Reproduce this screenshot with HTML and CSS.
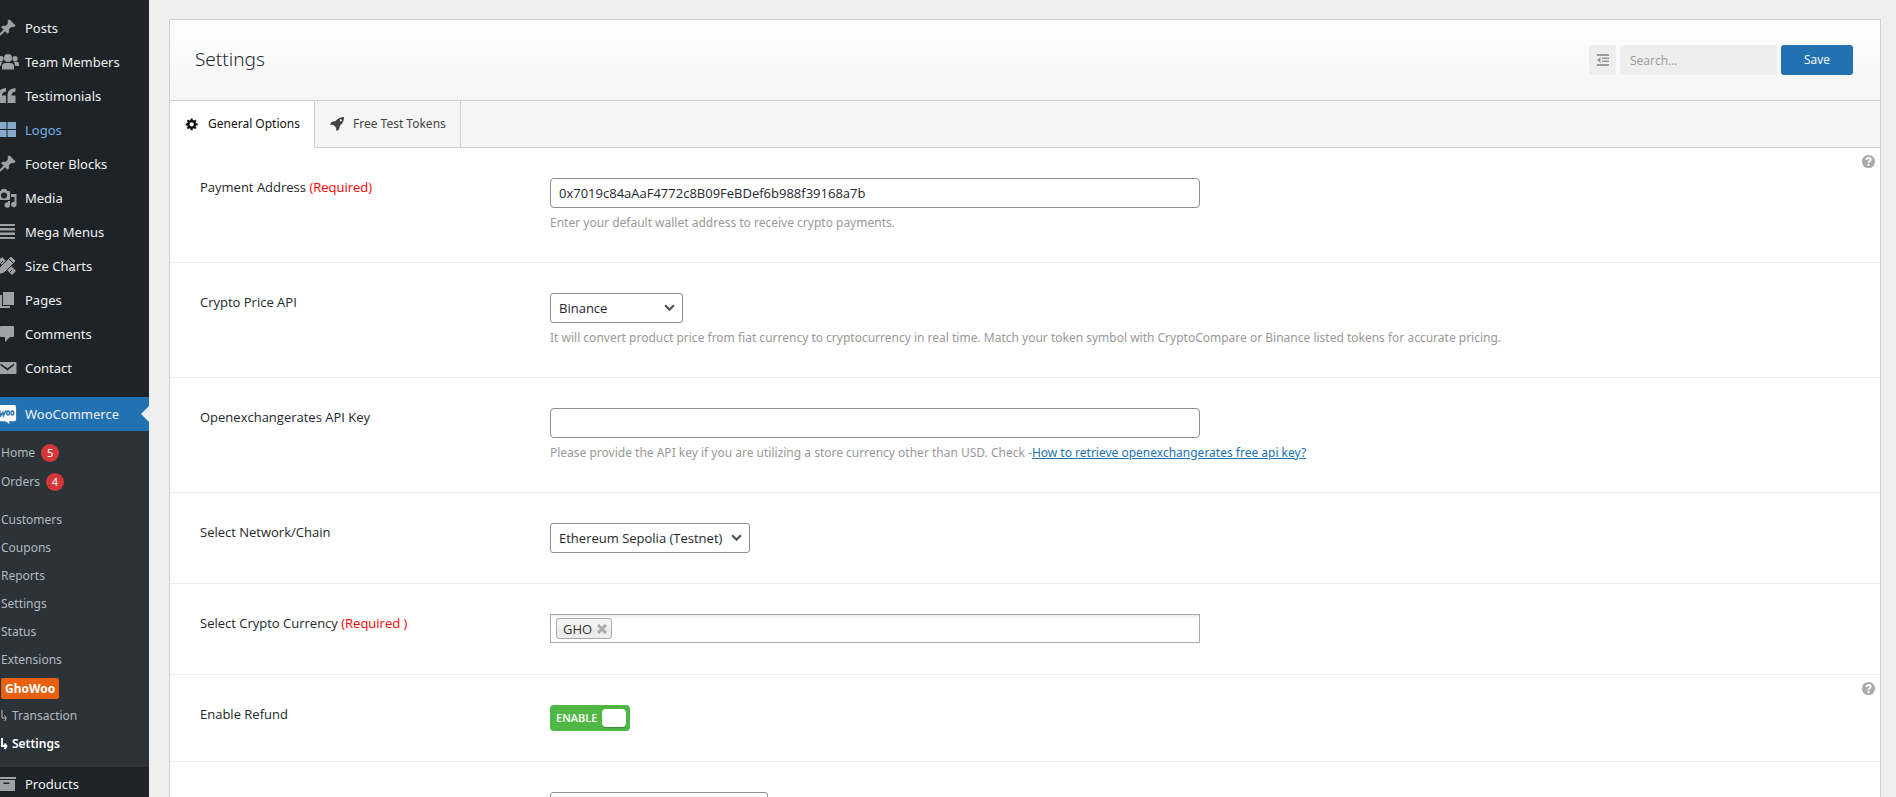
FILE: index.html
```html
<!DOCTYPE html>
<html lang="en">
<head>
<meta charset="utf-8">
<title>Settings</title>
<link rel="stylesheet" href="styles.css">
</head>
<body>
<svg class="defs" aria-hidden="true">
  <symbol id="pin" viewBox="0 0 20 20"><path d="M10.44 3.02l1.82-1.82 6.36 6.35-1.83 1.82c-1.05-.68-2.48-.57-3.41.36l-.75.75c-.92.93-1.04 2.35-.35 3.41l-1.83 1.82-2.41-2.41-2.8 2.79c-.42.42-3.38 2.71-3.8 2.29s1.86-3.39 2.28-3.81l2.79-2.79L4.1 9.36l1.83-1.82c1.05.69 2.48.57 3.4-.36l.75-.75c.93-.92 1.05-2.35.36-3.41z"/></symbol>
  <symbol id="help" viewBox="0 0 16 16"><circle cx="8" cy="8" r="7"/><path d="M5.700 6.300Q5.900 4.200 8 4.200Q10.300 4.200 10.300 6.200Q10.300 7.400 8.900 8Q8 8.400 8 9.400" fill="none" stroke="#fff" stroke-width="2"/><circle cx="8" cy="11.600" r="1.200" fill="#fff"/></symbol>
</svg>
<div class="layout">
  <nav class="side" aria-label="Admin menu">
    <ul class="menu">
      <li><a href="#"><svg class="ico" viewBox="0 0 20 20"><use href="#pin"/></svg>Posts</a></li>
      <li><a href="#"><svg class="ico wide-ico" viewBox="0 0 22 20"><circle cx="11" cy="6" r="4"/><path d="M5 17.500v-3q0-3.500 4-3.500h4q4 0 4 3.500v3z"/><circle cx="4" cy="6.500" r="2.600"/><circle cx="18" cy="6.500" r="2.600"/><path d="M0 14v-2q0-2.500 3-2.500h2.500Q4 11 4 14zM22 14v-2q0-2.500-3-2.500h-2.500Q18 11 18 14z"/></svg>Team Members</a></li>
      <li><a href="#"><svg class="ico" viewBox="0 0 20 20"><path d="M9 2v3.500Q5 6 5 9.500h4V17H1V9Q1 2.500 9 2zM18.500 2v3.500Q14.500 6 14.500 9.500h4V17h-8V9q0-6.500 8-7z"/></svg>Testimonials</a></li>
      <li><a href="#" class="hover"><svg class="ico" viewBox="0 0 20 20"><path d="M1 2h8.500v7H1zM10.500 2H19v7h-8.500zM1 10h8.500v7H1zM10.500 10H19v7h-8.500z"/></svg>Logos</a></li>
      <li><a href="#"><svg class="ico" viewBox="0 0 20 20"><use href="#pin"/></svg>Footer Blocks</a></li>
      <li><a href="#"><svg class="ico" viewBox="0 0 20 20"><path fill-rule="evenodd" d="M13 11V4c0-.550-.450-1-1-1h-1.670L9 1H5L3.670 3H2c-.550 0-1 .450-1 1v7c0 .550.450 1 1 1h10c.550 0 1-.450 1-1zM7 4.500a3 3 0 110 6 3 3 0 010-6z"/><path d="M14 6h5.500v10.500a2.700 2.700 0 11-2-2.600V9H14zM11 13h2v4a2.700 2.700 0 11-2-2.600z"/></svg>Media</a></li>
      <li><a href="#"><svg class="ico" viewBox="0 0 20 20"><path d="M1 2h17v2H1zM1 6h17v2.500H1zM1 10.500h17V13H1zM1 15h17v2H1z"/></svg>Mega Menus</a></li>
      <li><a href="#"><svg class="ico" viewBox="0 0 20 20"><path d="M1 5l4-4 14 14-4 4z"/><path d="M14 0l5 5L7 17l-6 2 1-7z" stroke="#1d2327"/><path d="M4 7l2-2M13 16l2-2M12 3l4 4" stroke="#1d2327" fill="none"/></svg>Size Charts</a></li>
      <li><a href="#"><svg class="ico" viewBox="0 0 20 20"><path d="M6 15V2h11v13H6zM5 16h8v2H3V5h2v11z"/></svg>Pages</a></li>
      <li><a href="#"><svg class="ico" viewBox="0 0 20 20"><path d="M4 2h12q1 0 1 1v9q0 1-1 1h-3l-5 5v-5H4q-1 0-1-1V3q0-1 1-1z"/></svg>Comments</a></li>
      <li><a href="#"><svg class="ico" viewBox="0 0 20 20"><path fill-rule="evenodd" d="M3 4h15.500q1 0 1 1v10q0 1-1 1H2.500q-1 0-1-1V5q0-1 1-1zM3.500 5.500v1.800L10.500 12.500l6.500-5.200V5.500L10.500 10.200z"/></svg>Contact</a></li>
      <li class="current"><a href="#"><svg class="ico woo" viewBox="0 0 20 22"><path d="M0 1h18q2 0 2 2v14q0 2-2 2h-6l1 3-5-3H0z"/><path d="M2 7l1 6 2.500-4 .5 4L9 7" class="woo-line"/><ellipse cx="11.200" cy="10" rx="1.500" ry="2.300" class="woo-line"/><ellipse cx="15.800" cy="10" rx="1.500" ry="2.300" class="woo-line"/></svg>WooCommerce</a>
        <ul class="sub">
          <li class="counted"><a href="#">Home <span class="count">5</span></a></li>
          <li class="counted last-counted"><a href="#">Orders <span class="count">4</span></a></li>
          <li><a href="#">Customers</a></li>
          <li><a href="#">Coupons</a></li>
          <li><a href="#">Reports</a></li>
          <li><a href="#">Settings</a></li>
          <li><a href="#">Status</a></li>
          <li><a href="#">Extensions</a></li>
          <li><a href="#"><b class="brand">GhoWoo</b></a></li>
          <li><a href="#"><svg class="hook" viewBox="0 0 7 12"><path d="M1 0v8h4M3.500 5.500l2 2.500-2 3"/></svg>Transaction</a></li>
          <li><a href="#" class="active"><svg class="hook bold" viewBox="0 0 7 12"><path d="M1 0v8h4M3.500 5.500l2 2.500-2 3"/></svg>Settings</a></li>
        </ul>
      </li>
      <li><a href="#"><svg class="ico" viewBox="0 0 20 20"><path fill-rule="evenodd" d="M0 3h19v2H0zM1 6h17v11H1zM6.500 8.500v1.500h6V8.500z"/></svg>Products</a></li>
    </ul>
  </nav>
  <main class="main">
    <form class="panel">
      <header class="head">
        <h1>Settings</h1>
        <div class="tools">
          <button type="button" class="expand" aria-label="Show all options"><svg viewBox="0 0 12 12"><path d="M0 0h12v2H0zM5 3.500h7v1.500H5zM5 6.500h7v1.500H5zM0 10h12v2H0zM3.500 3v6L0 6z"/></svg></button>
          <input type="search" class="search" placeholder="Search..." aria-label="Search">
          <button type="button" class="save">Save</button>
        </div>
      </header>
      <div class="tabs">
        <a href="#" class="tab on"><svg viewBox="0 0 20 20"><path fill-rule="evenodd" d="M18 12h-2.180c-.170.700-.440 1.350-.810 1.930l1.540 1.540-2.100 2.100-1.540-1.540c-.580.360-1.230.630-1.910.790V19H8v-2.180c-.680-.160-1.330-.430-1.910-.790l-1.540 1.540-2.120-2.120 1.540-1.540c-.360-.580-.630-1.230-.790-1.910H1V9.030h2.170c.160-.700.440-1.350.800-1.940L2.430 5.550l2.100-2.100 1.540 1.540c.580-.370 1.240-.640 1.930-.810V2h3v2.180c.680.160 1.330.430 1.910.790l1.540-1.540 2.120 2.120-1.540 1.540c.360.590.640 1.240.800 1.940H18V12zm-8.500 1.500c1.660 0 3-1.340 3-3s-1.340-3-3-3-3 1.340-3 3 1.340 3 3 3z"/></svg>General Options</a>
        <a href="#" class="tab"><svg viewBox="0 0 14 14"><path fill-rule="evenodd" d="M14 0q.3 5-4 8.500l-1 4-2.500 1.500-.5-3.500L3.500 8 0 7.500 1.500 5l4-1Q9 0 14 0zM10.800 2.200a1.100 1.100 0 100 2.200 1.100 1.100 0 000-2.200z"/></svg>Free Test Tokens</a>
      </div>
      <div class="field">
        <label class="title" for="address">Payment Address <span class="req">(Required)</span></label>
        <div class="body"><input id="address" class="text" type="text" value="0x7019c84aAaF4772c8B09FeBDef6b988f39168a7b"><p>Enter your default wallet address to receive crypto payments.</p></div>
        <svg class="help" viewBox="0 0 16 16"><use href="#help"/></svg>
      </div>
      <div class="field">
        <label class="title" for="api">Crypto Price API</label>
        <div class="body"><span class="select"><select id="api" class="narrow"><option>Binance</option></select><svg viewBox="0 0 10 7"><path d="M1 1l4 4 4-4"/></svg></span><p>It will convert product price from fiat currency to cryptocurrency in real time. Match your token symbol with CryptoCompare or Binance listed tokens for accurate pricing.</p></div>
      </div>
      <div class="field">
        <label class="title" for="key">Openexchangerates API Key</label>
        <div class="body"><input id="key" class="text" type="text"><p>Please provide the API key if you are utilizing a store currency other than USD. Check -<a href="#">How to retrieve openexchangerates free api key?</a></p></div>
      </div>
      <div class="field">
        <label class="title" for="chain">Select Network/Chain</label>
        <div class="body"><span class="select"><select id="chain" class="medium"><option>Ethereum Sepolia (Testnet)</option></select><svg viewBox="0 0 10 7"><path d="M1 1l4 4 4-4"/></svg></span></div>
      </div>
      <div class="field">
        <label class="title" for="coins">Select Crypto Currency <span class="req">(Required )</span></label>
        <div class="body"><div class="chosen"><span class="chip">GHO<button type="button" aria-label="Remove GHO"><svg viewBox="0 0 10 10"><path d="M1 1l8 8M9 1l-8 8"/></svg></button></span><input id="coins" type="text"></div></div>
      </div>
      <div class="field">
        <label class="title" for="refund">Enable Refund</label>
        <div class="body"><label class="switch"><input id="refund" type="checkbox" checked><span>ENABLE</span><i></i></label></div>
        <svg class="help" viewBox="0 0 16 16"><use href="#help"/></svg>
      </div>
      <div class="field">
        <div></div>
        <div class="body"><span class="select"><select class="wide" aria-label="Order status"><option></option></select></span></div>
      </div>
    </form>
  </main>
</div>
</body>
</html>
```
FILE: styles.css
```css
* { box-sizing: border-box; }
html, body { height: 100%; }
body { margin: 0; overflow: hidden; background: #efefef; color: #23282d; font: 13px/20px "Open Sans", "Noto Sans", sans-serif; }
ul, p, h1 { margin: 0; padding: 0; }
ul { list-style: none; }
a { color: #2271b1; }
input, select, button { margin: 0; font: inherit; color: inherit; }
.defs { display: none; }
.layout { display: flex; height: 100%; }

.side { flex: none; width: 149px; height: 100%; overflow: hidden; background: #1d2327; font-family: "Noto Sans", sans-serif; }
.menu { padding-top: 11px; }
.menu a { display: flex; align-items: center; text-decoration: none; color: #f0f0f1; }
.menu > li > a { position: relative; gap: 8px; height: 34px; font-size: 13px; }
.ico { flex: none; width: 20px; height: 20px; margin-left: -3px; fill: #9ca2a7; }
.wide-ico { width: 22px; margin-right: -2px; }
.menu .hover { color: #72aee6; }
.hover .ico { fill: #85a9cb; }
.current { padding-top: 12px; }
.current > a { background: #2271b1; }
.current > a::after { content: ""; position: absolute; right: 0; border: 8px solid transparent; border-right-color: #efefef; border-left: 0; }
.woo { fill: #fff; }
.woo-line { fill: none; stroke: #2271b1; stroke-width: 1.500; }
.sub { padding: 7px 0 9px; background: #2c3338; font-size: 12px; }
.sub a { height: 28px; padding-left: 1px; gap: 6px; color: #b4b9be; }
.sub .counted a { height: 29px; }
.last-counted { margin-bottom: 10px; }
.count { width: 18px; height: 18px; border-radius: 9px; background: #d63638; color: #fff; font-size: 11px; line-height: 18px; text-align: center; }
.brand { padding: 0 4px; border-radius: 2px; background: #e9600f; color: #fff; line-height: 21px; font-weight: 700; }
.sub .active { color: #fff; font-weight: 600; }
.hook { width: 7px; height: 12px; margin-right: -2px; fill: none; stroke: currentColor; stroke-width: 1; }
.hook.bold { stroke-width: 2; }

.main { flex: 1; min-width: 0; padding: 19px 15px 0 20px; }
.panel { border: 1px solid #ccd0d4; background: #fff; }
.head { display: flex; align-items: center; justify-content: space-between; height: 81px; padding: 0 27px 0 25px; border-bottom: 1px solid #ccd0d4; background: linear-gradient(#fefefe, #f5f5f5); }
h1 { padding-bottom: 2px; font-family: "Noto Sans", sans-serif; font-size: 19px; line-height: 30px; font-weight: 300; }
.tools { display: flex; gap: 4px; }
.tools > * { height: 30px; border: 0; border-radius: 2px; background: #eee; }
.expand { display: grid; place-items: center; width: 27px; padding: 0; }
.expand svg { width: 12px; height: 12px; fill: #999; }
.search { width: 157px; padding: 0 10px; font-size: 12px; }
.search::placeholder { color: #999; }
.tools .save { width: 72px; border-radius: 3px; background: #2271b1; color: #fff; font-size: 12px; }

.tabs { display: flex; height: 47px; border-bottom: 1px solid #ccd0d4; background: #f5f5f5; font: 12px/20px "Noto Sans", sans-serif; }
.tab { display: flex; align-items: center; gap: 9px; height: 47px; padding: 0 14px 0 15px; border-right: 1px solid #ccd0d4; border-bottom: 1px solid #ccd0d4; color: #444; text-decoration: none; }
.tab.on { background: #fff; border-bottom-color: #fff; color: #111; }
.tab svg { width: 14px; height: 14px; fill: currentColor; }

.field { position: relative; display: grid; grid-template-columns: 350px 1fr; padding: 30px; border-top: 1px solid #eee; }
.tabs + .field { border-top: 0; }
.title { line-height: 18px; }
.req { color: red; }
.body p { margin-top: 5px; font: 12px/19px "Noto Sans", sans-serif; color: #999; }
.text { display: block; width: 650px; max-width: 100%; height: 30px; padding: 0 8px; border: 1px solid #8c8f94; border-radius: 4px; background: #fff; }
.select { position: relative; display: flex; width: max-content; align-items: center; }
.select select { height: 30px; padding: 0 24px 0 8px; border: 1px solid #8c8f94; border-radius: 3px; background: #fff; appearance: none; }
.select svg { position: absolute; right: 8px; width: 11px; height: 8px; fill: none; stroke: #555; stroke-width: 2; pointer-events: none; }
.narrow { width: 133px; }
.medium { width: 200px; }
.wide { width: 218px; }
.chosen { display: flex; align-items: center; width: 650px; max-width: 100%; height: 29px; margin-bottom: 1px; padding: 0 5px; border: 1px solid #aaa; background: linear-gradient(#eee 1%, #fff 15%); }
.chosen input { flex: 1; min-width: 0; border: 0; outline: 0; background: none; }
.chip { display: flex; align-items: center; gap: 5px; height: 21px; padding: 0 4px 0 6px; border: 1px solid #aaa; border-radius: 3px; background: linear-gradient(#f4f4f4 20%, #f0f0f0 50%, #e8e8e8 52%, #eee); color: #333; }
.chip button { display: grid; width: 10px; height: 10px; padding: 0; border: 0; background: none; }
.chip svg { width: 10px; height: 10px; stroke: #aaa; stroke-width: 3; }
.switch { display: flex; align-items: center; justify-content: space-between; width: 80px; height: 26px; padding: 0 4px 0 6px; border-radius: 4px; background: #4fb845; color: #fff; font-size: 11px; font-weight: 600; }
.switch input { position: absolute; opacity: 0; }
.switch i { width: 24px; height: 18px; border-radius: 4px; background: #fff; box-shadow: 0 1px 1px #3a8a32; }
.help { position: absolute; top: 6px; right: 4px; width: 15px; height: 15px; fill: #aaa; }
```
